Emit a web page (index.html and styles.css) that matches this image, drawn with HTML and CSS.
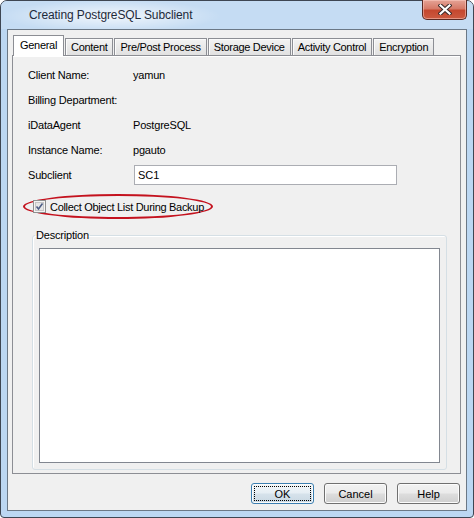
FILE: index.html
```html
<!DOCTYPE html>
<html>
<head>
    <meta charset="utf-8">
    <title>Creating PostgreSQL Subclient</title>
    <link rel="stylesheet" href="styles.css">
</head>
<body>
    <div class="window">
        <div class="titlebar">
            <span class="title">Creating PostgreSQL Subclient</span>
            <button class="close" title="Close">
                <svg width="14" height="11" viewBox="0 0 14 11">
                    <path d="M2.5 1.5 L11.5 9.5 M11.5 1.5 L2.5 9.5" stroke="#3a2a2a" stroke-width="4.2" stroke-linecap="square"/>
                    <path d="M2.5 1.5 L11.5 9.5 M11.5 1.5 L2.5 9.5" stroke="#ffffff" stroke-width="2.2" stroke-linecap="square"/>
                </svg>
            </button>
        </div>
        <div class="client">
            <div class="tabs">
                <div class="tab active">General</div>
                <div class="tab">Content</div>
                <div class="tab">Pre/Post Process</div>
                <div class="tab">Storage Device</div>
                <div class="tab">Activity Control</div>
                <div class="tab">Encryption</div>
            </div>
            <div class="panel">
                <div class="fields">
                    <div class="row"><span class="label">Client Name:</span><span class="value">yamun</span></div>
                    <div class="row"><span class="label">Billing Department:</span><span class="value"></span></div>
                    <div class="row"><span class="label">iDataAgent</span><span class="value">PostgreSQL</span></div>
                    <div class="row"><span class="label">Instance Name:</span><span class="value">pgauto</span></div>
                    <div class="row"><span class="label">Subclient</span><input class="text" type="text" value="SC1"></div>
                </div>
                <div class="check">
                    <span class="box">
                        <svg width="13" height="13" viewBox="0 0 13 13">
                            <rect x="0.5" y="0.5" width="12" height="12" fill="#f4f4f4" stroke="#8f8f8f"/>
                            <rect x="2.5" y="2.5" width="8" height="8" fill="#e6e6e6" stroke="#c6c6c6"/>
                            <path d="M3.5 6.5 L5.5 9 L9.5 3.5" fill="none" stroke="#4d5d86" stroke-width="1.6"/>
                        </svg>
                    </span>
                    <span>Collect Object List During Backup</span>
                </div>
                <fieldset class="group">
                    <legend>Description</legend>
                    <textarea class="description"></textarea>
                </fieldset>
            </div>
            <div class="buttons">
                <button class="btn default">OK</button>
                <button class="btn">Cancel</button>
                <button class="btn">Help</button>
            </div>
        </div>
    </div>
</body>
</html>
```

FILE: styles.css
```css
body {
    margin: 0;
    background: #ffffff;
    font-family: "Liberation Sans", Arial, sans-serif;
    font-size: 11px;
    letter-spacing: -0.2px;
    color: #000000;
}
.window {
    box-sizing: border-box;
    width: 474px;
    height: 518px;
    display: flex;
    flex-direction: column;
    padding: 0 6px 6px 6px;
    border: 1px solid #3e4652;
    border-radius: 7px 7px 4px 4px;
    background: #bcd7f2;
}
/* Title bar with the soft glow behind the caption */
.titlebar {
    height: 28px;
    display: flex;
    justify-content: space-between;
    align-items: flex-start;
    margin: 0 -6px;
    padding: 0 6px 0 28px;
    background:
        radial-gradient(ellipse 110px 16px at 110px 15px, rgba(255,255,255,0.75), rgba(255,255,255,0) 100%),
        #c5dcf3;
    border-radius: 6px 6px 0 0;
}
.title {
    font-family: "Liberation Sans", Arial, sans-serif;
    font-size: 12px;
    letter-spacing: -0.1px;
    line-height: 28px;
    color: #1e2a3a;
}
.close {
    width: 45px;
    height: 20px;
    margin-top: -1px;
    padding: 0;
    display: flex;
    align-items: center;
    justify-content: center;
    border: 1px solid #5a2a24;
    border-top: none;
    border-radius: 0 0 5px 5px;
    background: linear-gradient(#e5a396 0%, #d67a68 45%, #c5482f 55%, #cc5a40 100%);
    box-shadow: inset 0 0 0 1px rgba(255,210,200,0.5);
}
.client {
    flex: 1;
    display: flex;
    flex-direction: column;
    padding: 5px 5px 6px 4px;
    border: 1px solid #6b7886;
    background: #f0f0f0;
}
/* Tab strip */
.tabs {
    height: 20px;
    display: flex;
    align-items: flex-end;
    padding-left: 1px;
    position: relative;
    z-index: 1;
    letter-spacing: -0.3px;
}
.tab {
    flex-shrink: 0;
    white-space: nowrap;
    height: 16px;
    line-height: 16px;
    padding: 0 5px;
    margin-right: 1px;
    border: 1px solid #8c8e94;
    border-bottom: none;
    background: linear-gradient(#f3f3f3, #e1e1e1);
    box-shadow: inset 1px 1px 0 #fbfbfb;
}
.tab.active {
    height: 20px;
    line-height: 18px;
    margin-bottom: -1px;
    padding: 0 6px;
    background: #ffffff;
    box-shadow: none;
}
.panel {
    flex: 1;
    display: flex;
    flex-direction: column;
    padding: 6px 0 0 15px;
    border: 1px solid #8c8e94;
    background: #f0f0f0;
    box-shadow: inset 0 1px 0 #ffffff;
}
.fields {
    display: flex;
    flex-direction: column;
}
.row {
    height: 25px;
    display: flex;
    align-items: center;
}
.label {
    width: 105px;
}
.text {
    box-sizing: border-box;
    width: 263px;
    height: 20px;
    margin: 0 0 0 1px;
    padding: 0 3px;
    border: 1px solid #abadb3;
    background: #ffffff;
    font: inherit;
    color: #000000;
    outline: none;
}
/* Checkbox row, ringed with a red ellipse */
.check {
    align-self: flex-start;
    box-sizing: border-box;
    width: 190px;
    height: 25px;
    margin: 7px 0 0 -5px;
    padding-left: 8px;
    display: flex;
    align-items: center;
    gap: 4px;
    white-space: nowrap;
    letter-spacing: -0.3px;
    border: 2px solid #c4121e;
    border-radius: 50%;
}
.box {
    display: flex;
}
.group {
    flex: 1;
    display: flex;
    flex-direction: column;
    margin: 10px 13px 3px 4px;
    padding: 6px;
    border: 1px solid #d5dfe5;
    border-radius: 3px;
    box-shadow: inset 1px 1px 0 #ffffff;
}
.group legend {
    padding: 0 1px;
    margin-left: -4px;
    line-height: 13px;
    color: #000000;
}
.description {
    flex: 1;
    margin: 0;
    resize: none;
    border: 1px solid #828790;
    background: #ffffff;
    outline: none;
}
/* Dialog buttons */
.buttons {
    height: 21px;
    margin-top: 9px;
    padding-right: 1px;
    display: flex;
    justify-content: flex-end;
    gap: 10px;
}
.btn {
    width: 63px;
    height: 21px;
    padding: 0;
    font: inherit;
    color: #000000;
    border: 1px solid #707070;
    border-radius: 3px;
    background: linear-gradient(#f2f2f2 0%, #ebebeb 48%, #dddddd 52%, #cfcfcf 100%);
    box-shadow: inset 0 0 0 1px #fbfbfb;
}
.btn.default {
    border-color: #3c7fb1;
    background: linear-gradient(#f1f6f9 0%, #e6eef4 48%, #d6e2eb 52%, #c9d8e3 100%);
    outline: 1px dotted #000000;
    outline-offset: -4px;
}
```
